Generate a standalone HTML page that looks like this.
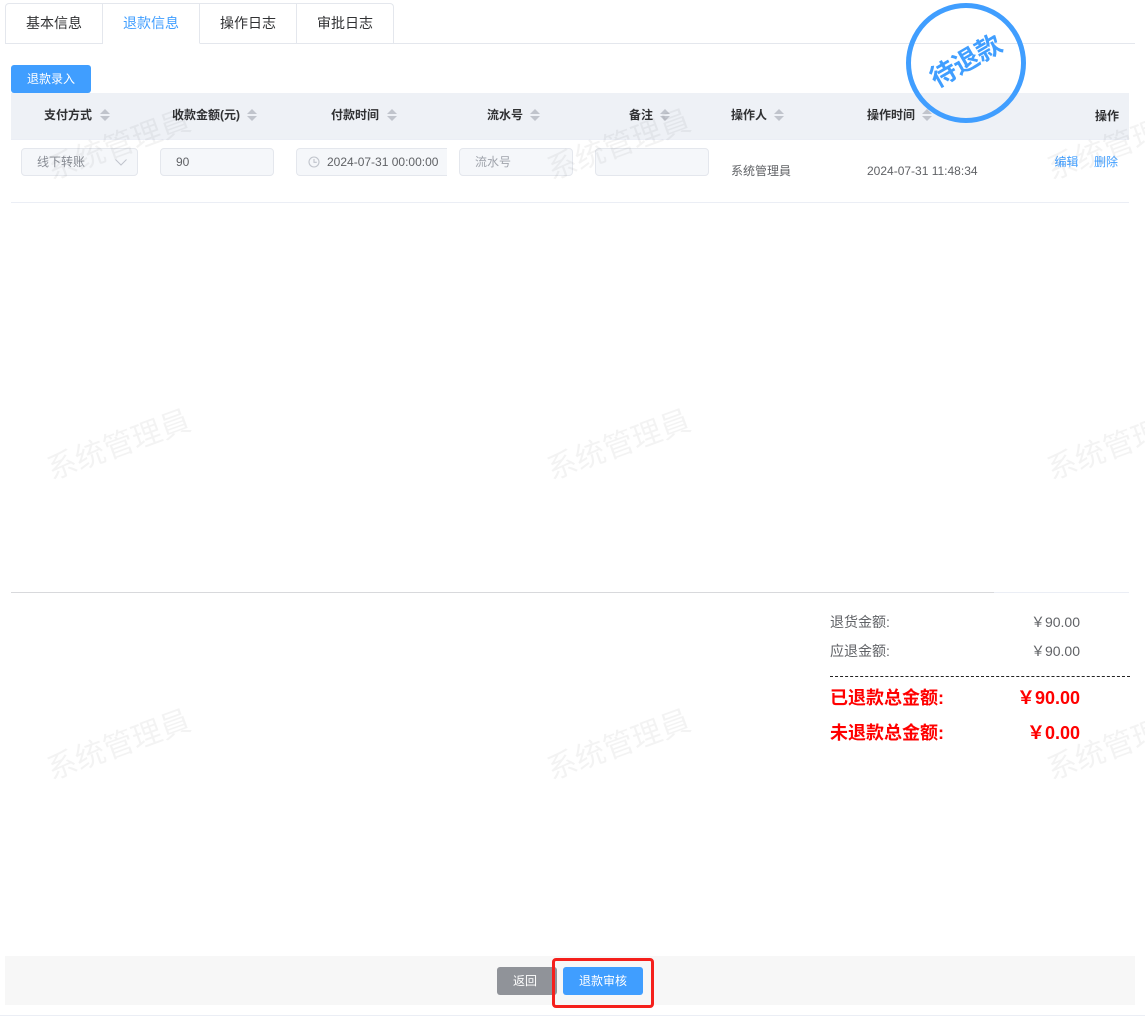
<!DOCTYPE html>
<html lang="zh">
<head>
<meta charset="utf-8">
<style>
html,body{margin:0;padding:0;width:1145px;height:1016px;overflow:hidden;background:#fff}
body{position:relative;font-family:"Liberation Sans","Noto Sans CJK SC",sans-serif;color:#303133}
.a{position:absolute;white-space:nowrap;box-sizing:border-box}
.wmbox{position:absolute;left:0;top:0;width:1145px;height:1016px;overflow:hidden;contain:paint;z-index:20;pointer-events:none}
.wm{position:absolute;white-space:nowrap;font-size:30px;line-height:40px;width:160px;text-align:center;color:#000;opacity:.042;transform:rotate(-20deg)}
.tab{position:absolute;top:3px;height:41px;line-height:41px;text-align:center;font-size:14px;color:#303133;box-sizing:border-box;border:1px solid #e4e7ed;border-left:0}
.th{position:absolute;top:93px;height:47px;line-height:44px;font-size:12px;font-weight:700;color:#303133;white-space:nowrap}
.up,.dn{position:absolute;width:0;height:0;border-left:5px solid transparent;border-right:5px solid transparent}
.up{border-bottom:5px solid #c0c4cc;top:109px}
.dn{border-top:5px solid #c0c4cc;top:116px}
.inp{position:absolute;top:148px;height:28px;background:#f5f7fa;border:1px solid #e4e7ed;border-radius:4px;box-sizing:border-box;font-size:12px;line-height:26px;color:#606266;white-space:nowrap}
.sm{position:absolute;font-size:12px;white-space:nowrap;line-height:16px}
</style>
</head>
<body>
<div class="a" style="left:5px;top:43px;width:1130px;height:1px;background:#e4e7ed"></div>
<div class="a" style="left:5px;top:3px;width:389px;height:41px;border:1px solid #e4e7ed;border-bottom:0;border-radius:4px 4px 0 0"></div>
<div class="tab" style="left:6px;width:97px;border-top:0;border-bottom:0;top:4px;height:39px;line-height:39px">基本信息</div>
<div class="tab" style="left:103px;width:97px;border-top:0;border-bottom:1px solid #fff;top:4px;height:40px;line-height:39px;color:#409eff;background:#fff">退款信息</div>
<div class="tab" style="left:200px;width:97px;border-top:0;border-bottom:0;top:4px;height:39px;line-height:39px">操作日志</div>
<div class="tab" style="left:297px;width:96px;border:0;top:4px;height:39px;line-height:39px">审批日志</div>

<div class="a" style="left:11px;top:65px;width:80px;height:28px;background:#409eff;border-radius:3px;color:#fff;font-size:12px;line-height:28px;text-align:center">退款录入</div>

<div class="a" style="left:11px;top:93px;width:1118px;height:47px;background:#eef1f6;border-bottom:1px solid #ebeef5"></div>

<div class="th" style="left:44px">支付方式</div><i class="up" style="left:100px"></i><i class="dn" style="left:100px"></i>
<div class="th" style="left:172px">收款金额(元)</div><i class="up" style="left:247px"></i><i class="dn" style="left:247px"></i>
<div class="th" style="left:331px">付款时间</div><i class="up" style="left:387px"></i><i class="dn" style="left:387px"></i>
<div class="th" style="left:487px">流水号</div><i class="up" style="left:530px"></i><i class="dn" style="left:530px"></i>
<div class="th" style="left:629px">备注</div><i class="up" style="left:660px"></i><i class="dn" style="left:660px"></i>
<div class="th" style="left:731px">操作人</div><i class="up" style="left:774px"></i><i class="dn" style="left:774px"></i>
<div class="th" style="left:867px">操作时间</div><i class="up" style="left:922px"></i><i class="dn" style="left:922px"></i>
<div class="th" style="left:1095px;top:94px">操作</div>

<div class="inp" style="left:21px;width:117px;padding-left:15px;color:#888c94">线下转账
  <svg style="position:absolute;left:92px;top:9px" width="14" height="9" viewBox="0 0 14 9"><path d="M1.5 1.5 L7 7 L12.5 1.5" fill="none" stroke="#c0c4cc" stroke-width="1"/></svg>
</div>
<div class="inp" style="left:160px;width:114px;padding-left:15px">90</div>
<div class="inp" style="left:296px;width:151px;padding-left:30px;border-right:0;border-radius:4px 0 0 4px;overflow:hidden">2024-07-31 00:00:00
  <svg style="position:absolute;left:11px;top:7px" width="12" height="12" viewBox="0 0 12 12"><circle cx="6" cy="6" r="5" fill="none" stroke="#c0c4cc" stroke-width="1.1"/><path d="M6 3V6.3H8.8" fill="none" stroke="#c0c4cc" stroke-width="1.1"/></svg>
</div>
<div class="inp" style="left:459px;width:114px;padding-left:15px;color:#a0a4ac">流水号</div>
<div class="inp" style="left:595px;width:114px"></div>
<div class="sm" style="left:731px;top:163px;color:#606266">系统管理員</div>
<div class="sm" style="left:867px;top:163px;color:#606266">2024-07-31 11:48:34</div>
<div class="sm" style="left:1054.5px;top:154px;color:#409eff">编辑</div>
<div class="sm" style="left:1094px;top:154px;color:#409eff">删除</div>
<div class="a" style="left:11px;top:202px;width:1118px;height:1px;background:#ebeef5"></div>

<div class="a" style="left:906px;top:3px;width:120px;height:120px;border:5px solid #409eff;border-radius:50%;z-index:5"></div>
<div class="a" style="left:906px;top:39px;width:120px;height:44px;line-height:44px;text-align:center;font-size:26px;font-weight:700;color:#409eff;transform:rotate(-30deg);z-index:5">待退款</div>

<div class="a" style="left:11px;top:592px;width:983px;height:1px;background:#d8d9dc"></div>
<div class="a" style="left:994px;top:592px;width:135px;height:1px;background:#ebeef5"></div>

<div class="a" style="left:830px;top:613px;font-size:14px;line-height:18px;color:#606266">退货金额:</div>
<div class="a" style="left:980px;width:100px;top:613px;text-align:right;font-size:14px;line-height:18px;color:#606266">￥90.00</div>
<div class="a" style="left:830px;top:642px;font-size:14px;line-height:18px;color:#606266">应退金额:</div>
<div class="a" style="left:980px;width:100px;top:642px;text-align:right;font-size:14px;line-height:18px;color:#606266">￥90.00</div>
<div class="a" style="left:830px;top:676px;width:300px;height:0;border-top:1px dashed #222"></div>
<div class="a" style="left:830px;top:687px;font-size:18px;line-height:22px;font-weight:700;color:#f00">已退款总金额:</div>
<div class="a" style="left:980px;width:100px;top:687px;text-align:right;font-size:18px;line-height:22px;font-weight:700;color:#f00">￥90.00</div>
<div class="a" style="left:830px;top:722px;font-size:18px;line-height:22px;font-weight:700;color:#f00">未退款总金额:</div>
<div class="a" style="left:980px;width:100px;top:722px;text-align:right;font-size:18px;line-height:22px;font-weight:700;color:#f00">￥0.00</div>

<div class="a" style="left:5px;top:956px;width:1130px;height:49px;background:#f7f7f7"></div>
<div class="a" style="left:0;top:1015px;width:1145px;height:1px;background:#ebeef5"></div>
<div class="a" style="left:497px;top:967px;width:60px;height:28px;background:#909399;border-radius:3px;color:#fff;font-size:12px;line-height:28px;padding-left:16px">返回</div>
<div class="a" style="left:563px;top:967px;width:80px;height:28px;background:#409eff;border-radius:3px;color:#fff;font-size:12px;line-height:28px;text-align:center">退款审核</div>
<div class="a" style="left:552px;top:958px;width:102px;height:50px;border:3px solid #f5201c;border-radius:4px"></div>

<div class="wmbox">
<div class="wm" style="left:39px;top:126px">系统管理員</div>
<div class="wm" style="left:539px;top:126px">系统管理員</div>
<div class="wm" style="left:1039px;top:126px">系统管理員</div>
<div class="wm" style="left:39px;top:426px">系统管理員</div>
<div class="wm" style="left:539px;top:426px">系统管理員</div>
<div class="wm" style="left:1039px;top:426px">系统管理員</div>
<div class="wm" style="left:39px;top:726px">系统管理員</div>
<div class="wm" style="left:539px;top:726px">系统管理員</div>
<div class="wm" style="left:1039px;top:726px">系统管理員</div>
</div>
</body>
</html>
